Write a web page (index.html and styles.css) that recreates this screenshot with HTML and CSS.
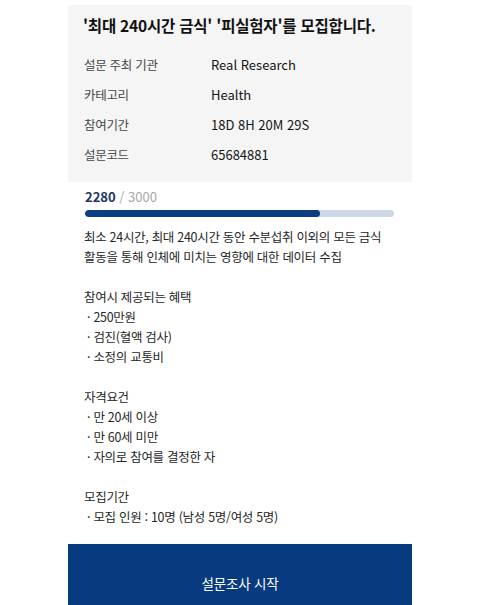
FILE: index.html
```html
<!DOCTYPE html>
<html lang="ko">
<head>
<meta charset="utf-8">
<title>설문조사</title>
<link rel="stylesheet" href="styles.css">
</head>
<body>
<main class="page">
  <section class="card">
    <h1 class="title">'최대 240시간 금식' '피실험자'를 모집합니다.</h1>
    <dl class="info">
      <div class="row"><dt>설문 주최 기관</dt><dd>Real Research</dd></div>
      <div class="row"><dt>카테고리</dt><dd>Health</dd></div>
      <div class="row"><dt>참여기간</dt><dd>18D 8H 20M 29S</dd></div>
      <div class="row"><dt>설문코드</dt><dd>65684881</dd></div>
    </dl>
  </section>

  <section class="content">
    <div class="count"><span class="now">2280</span> <span class="total">/ 3000</span></div>
    <div class="bar"><div class="fill" style="width:76%"></div></div>

    <div class="sections">
      <p class="desc">최소 24시간, 최대 240시간 동안 수분섭취 이외의 모든 금식<br>활동을 통해 인체에 미치는 영향에 대한 데이터 수집</p>

      <div class="group">
        <p class="head">참여시 제공되는 혜택</p>
        <p class="item">· 250만원</p>
        <p class="item">· 검진(혈액 검사)</p>
        <p class="item">· 소정의 교통비</p>
      </div>

      <div class="group">
        <p class="head">자격요건</p>
        <p class="item">· 만 20세 이상</p>
        <p class="item">· 만 60세 미만</p>
        <p class="item">· 자의로 참여를 결정한 자</p>
      </div>

      <div class="group">
        <p class="head">모집기간</p>
        <p class="item">· 모집 인원 : 10명 (남성 5명/여성 5명)</p>
      </div>
    </div>
  </section>

  <button class="start" type="button">설문조사 시작</button>
</main>
</body>
</html>
```

FILE: styles.css
```css
* { box-sizing: border-box; }

html, body {
  margin: 0;
  padding: 0;
  background: #ffffff;
}

body {
  font-family: "Noto Sans CJK KR", "Noto Sans", sans-serif;
  color: #2b2b2b;
  overflow: hidden;
}

.page {
  width: 344px;
  margin: 0 auto;
  padding-top: 5px;
  padding-bottom: 80px;
}

.card {
  background: #f5f5f5;
  padding: 8px 16px 13px 15px;
}

.title {
  margin: 0;
  font-size: 15.5px;
  line-height: 24px;
  font-weight: 700;
  color: #111111;
  letter-spacing: -0.2px;
}

.info {
  margin: 12px 0 0 1px;
  display: flex;
  flex-direction: column;
}

.row {
  display: flex;
  align-items: center;
  height: 30px;
  font-size: 12.5px;
  letter-spacing: -0.3px;
}

.row dt {
  width: 127px;
  color: #474747;
}

.row dd {
  margin: 0;
  color: #141414;
  font-weight: 400;
  font-size: 13px;
  letter-spacing: 0;
}

.content {
  padding: 5px 18px 0 16px;
  font-size: 12.5px;
  line-height: 20px;
  letter-spacing: -0.3px;
  color: #262626;
}

.count {
  font-size: 13px;
  line-height: 20px;
  padding-left: 1px;
  letter-spacing: 0;
}

.now {
  color: #1c3566;
  font-weight: 700;
}

.total {
  color: #a6a6a6;
}

.bar {
  margin: 3px 0 0 1px;
  height: 7px;
  border-radius: 4px;
  background: #cfd7e4;
  overflow: hidden;
}

.fill {
  height: 100%;
  border-radius: 4px;
  background: #0c3c82;
}

.sections {
  margin-top: 10px;
  display: flex;
  flex-direction: column;
  gap: 20px;
}

.sections p {
  margin: 0;
}

.item {
  padding-left: 3px;
}

.start {
  position: fixed;
  bottom: 0;
  left: calc(50% - 172px);
  width: 344px;
  height: 61px;
  border: 0;
  margin: 0;
  padding: 16px 0 0;
  background: #073a7e;
  color: #ffffff;
  font-family: "Noto Sans CJK KR", "Noto Sans", sans-serif;
  font-size: 13.5px;
  line-height: 20px;
  letter-spacing: -0.2px;
}
```
